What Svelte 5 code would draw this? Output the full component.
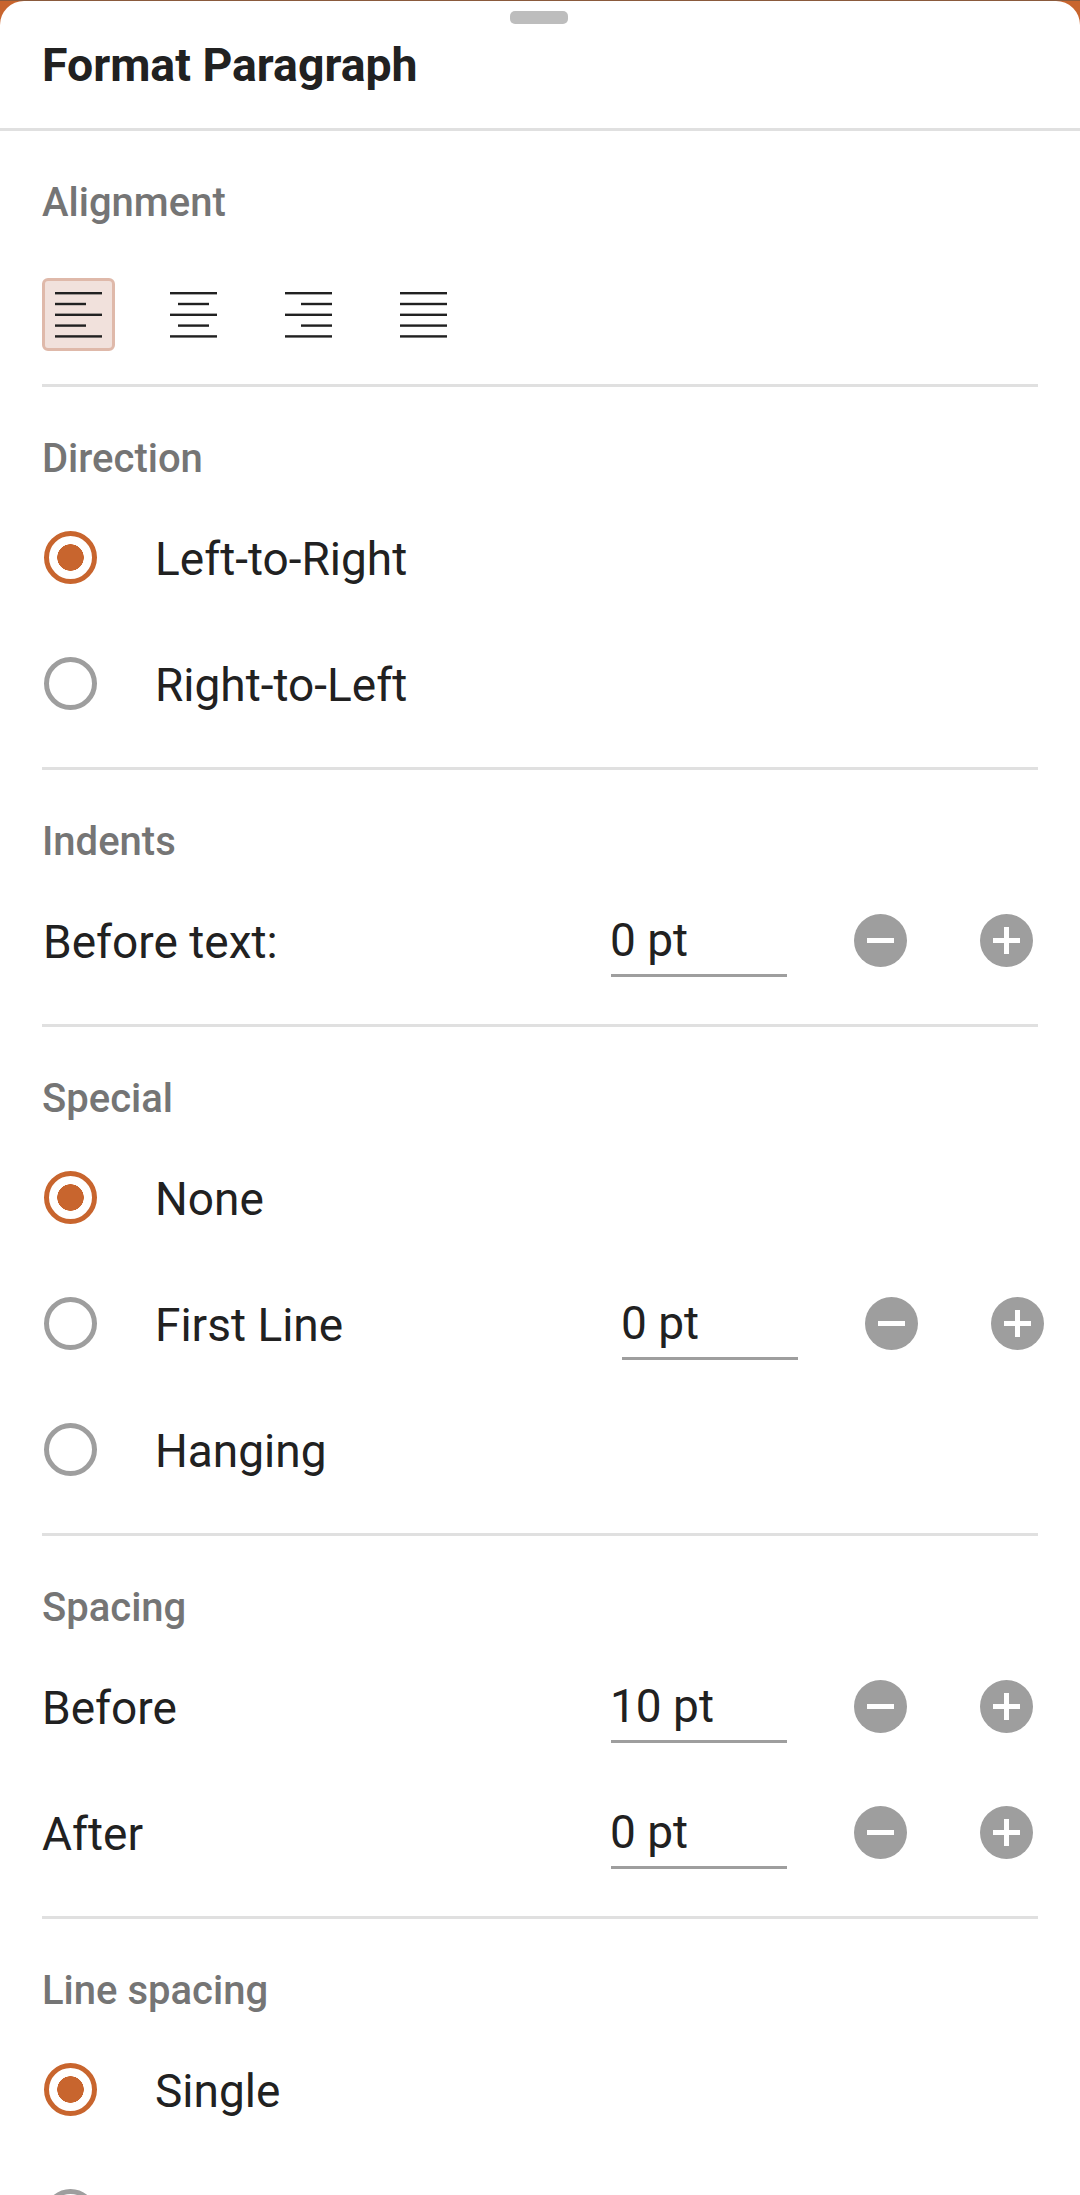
<script>
  // alignment icons: each line is [x offset, width] inside a 47px box
  const alignments = [
    { name: 'left', lines: [[0, 47], [0, 31], [0, 47], [0, 31], [0, 47]] },
    { name: 'center', lines: [[0, 47], [8, 31], [0, 47], [8, 31], [0, 47]] },
    { name: 'right', lines: [[0, 47], [16, 31], [0, 47], [16, 31], [0, 47]] },
    { name: 'justify', lines: [[0, 47], [0, 47], [0, 47], [0, 47], [0, 47]] }
  ];
  let alignment = $state('left');
</script>

{#snippet radio(label, checked)}
  <div class="row">
    <span class="radio" class:checked></span>
    <span class="radio_label">{label}</span>
  </div>
{/snippet}

{#snippet stepper(value)}
  <div class="stepper">
    <span class="field">{value}</span>
    <svg class="step first" viewBox="0 0 53 53" aria-hidden="true">
      <circle cx="26.5" cy="26.5" r="26.5" fill="#9e9e9e" />
      <rect x="13" y="24" width="27" height="5" fill="#fff" />
    </svg>
    <svg class="step" viewBox="0 0 53 53" aria-hidden="true">
      <circle cx="26.5" cy="26.5" r="26.5" fill="#9e9e9e" />
      <rect x="13" y="24" width="27" height="5" fill="#fff" />
      <rect x="24" y="13" width="5" height="27" fill="#fff" />
    </svg>
  </div>
{/snippet}

<div class="page">
  <div class="sheet">
    <div class="handle"></div>
    <header class="header">
      <h1>Format Paragraph</h1>
    </header>

    <section class="section first_section">
      <h2>Alignment</h2>
      <div class="align_row">
        {#each alignments as item}
          <button class="align_btn" class:active={alignment === item.name} onclick={() => (alignment = item.name)} aria-label={item.name}>
            <svg width="47" height="47" viewBox="0 0 47 47">
              {#each item.lines as line, i}
                <rect x={line[0]} y={1 + i * 10.8} width={line[1]} height="2.4" fill="#212121" />
              {/each}
            </svg>
          </button>
        {/each}
      </div>
    </section>

    <section class="section">
      <h2>Direction</h2>
      {@render radio('Left-to-Right', true)}
      {@render radio('Right-to-Left', false)}
    </section>

    <section class="section">
      <h2>Indents</h2>
      <div class="row">
        <span class="text_label indented">Before text:</span>
        {@render stepper('0 pt')}
      </div>
    </section>

    <section class="section">
      <h2>Special</h2>
      {@render radio('None', true)}
      <div class="row shifted">
        <span class="radio"></span>
        <span class="radio_label">First Line</span>
        {@render stepper('0 pt')}
      </div>
      {@render radio('Hanging', false)}
    </section>

    <section class="section">
      <h2>Spacing</h2>
      <div class="row">
        <span class="text_label">Before</span>
        {@render stepper('10 pt')}
      </div>
      <div class="row">
        <span class="text_label">After</span>
        {@render stepper('0 pt')}
      </div>
    </section>

    <section class="section">
      <h2>Line spacing</h2>
      {@render radio('Single', true)}
      {@render radio('', false)}
    </section>
  </div>
</div>

<style>
  :global(body) {
    margin: 0;
    font-family: Roboto, "Liberation Sans", sans-serif;
    color: #212121;
  }
  .page {
    width: 1080px;
    height: 2195px;
    overflow: hidden;
    background: #c8652e;
    border-top: 1px solid #8a5a3c;
    box-sizing: border-box;
  }
  .sheet {
    position: relative;
    height: 100%;
    background: #fff;
    border-radius: 24px 24px 0 0;
  }
  .handle {
    position: absolute;
    top: 10px;
    left: 510px;
    width: 58px;
    height: 13px;
    border-radius: 5px;
    background: #bdbdbd;
  }
  .header {
    height: 127px;
    padding-left: 42px;
    display: flex;
    align-items: center;
    border-bottom: 3px solid #e0e0e0;
  }
  h1 {
    margin: 0;
    font-size: 46.4px;
    font-weight: 700;
  }
  .section {
    margin: 0 42px;
    padding: 47px 0 21px;
    border-bottom: 3px solid #e0e0e0;
  }
  .first_section {
    padding-bottom: 33px;
  }
  h2 {
    margin: 0 0 10px;
    font-size: 40px;
    font-weight: 500;
    line-height: 50px;
    color: #757575;
  }
  .row {
    display: flex;
    align-items: center;
    height: 126px;
    font-size: 46px;
  }
  .shifted {
    margin-right: -11px;
  }
  .radio {
    flex: none;
    width: 53px;
    height: 53px;
    margin: 0 58px 0 2px;
    box-sizing: border-box;
    border: 5px solid #9e9e9e;
    border-radius: 50%;
    background: #fff;
  }
  .radio.checked {
    border-color: #c8652e;
    background: radial-gradient(circle, #c8652e 13px, #fff 13.5px);
  }
  .radio_label,
  .text_label {
    padding-top: 3px;
  }
  .text_label.indented {
    margin-left: 1px;
  }
  .stepper {
    margin-left: auto;
    display: flex;
    align-items: center;
    margin-right: 5px;
  }
  .field {
    width: 176px;
    height: 71px;
    line-height: 69px;
    box-sizing: border-box;
    border-bottom: 3px solid #9e9e9e;
    margin-top: 3px;
    margin-left: -1px;
    text-indent: -1px;
  }
  .step {
    width: 53px;
    height: 53px;
    margin-left: 73px;
  }
  .step.first {
    margin-left: 67px;
  }
  .align_row {
    display: flex;
    height: 73px;
    margin-top: 50px;
    gap: 42px;
  }
  .align_btn {
    width: 73px;
    height: 73px;
    padding: 0;
    display: flex;
    align-items: center;
    justify-content: center;
    box-sizing: border-box;
    border: 3px solid transparent;
    border-radius: 6px;
    background: none;
  }
  .align_btn.active {
    background: #f1e1dc;
    border-color: #dfb9aa;
  }
</style>
